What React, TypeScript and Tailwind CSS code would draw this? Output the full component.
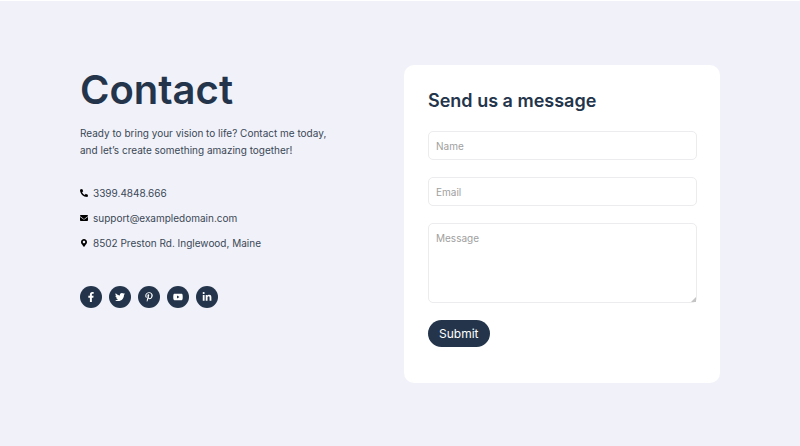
import React from "react";
import {
  FaEnvelope,
  FaFacebookF,
  FaLinkedinIn,
  FaMapMarkerAlt,
  FaPhoneAlt,
  FaPinterestP,
  FaTwitter,
  FaYoutube,
} from "react-icons/fa";

const details = [
  { icon: FaPhoneAlt, text: "3399.4848.666" },
  { icon: FaEnvelope, text: "support@exampledomain.com" },
  { icon: FaMapMarkerAlt, text: "8502 Preston Rd. Inglewood, Maine" },
];

const socials = [
  { icon: FaFacebookF, label: "Facebook" },
  { icon: FaTwitter, label: "Twitter" },
  { icon: FaPinterestP, label: "Pinterest" },
  { icon: FaYoutube, label: "YouTube" },
  { icon: FaLinkedinIn, label: "LinkedIn" },
];

const field =
  "block w-full rounded-[5px] border border-[#ececee] bg-white px-[7px] text-[10px] leading-4 text-[#3a4856] placeholder:text-[#a0a0a0] focus:outline-none focus:border-[#24354b]";

export default function App() {
  return (
    <main className="min-h-screen border-t border-white bg-[#f1f1f9] px-20 py-16 font-['Inter',sans-serif] text-[10px] leading-4 text-[#3a4856]">
      <div className="grid grid-cols-2 gap-2">
        <section>
          <h1 className="text-[40px] font-semibold leading-[50px] text-[#24354b]">Contact</h1>
          <p className="mt-[10px] leading-[17px]">
            Ready to bring your vision to life? Contact me today,
            <br />
            and let’s create something amazing together!
          </p>
          <ul className="mt-[26px] flex flex-col gap-[9px]">
            {details.map(({ icon: Icon, text }) => (
              <li key={text} className="flex items-center gap-[5px]">
                <Icon className="size-2 text-black" aria-hidden="true" />
                {text}
              </li>
            ))}
          </ul>
          <div className="mt-[35px] flex gap-[7px]">
            {socials.map(({ icon: Icon, label }) => (
              <a
                key={label}
                href="#"
                aria-label={label}
                className="flex size-[22px] items-center justify-center rounded-full bg-[#24354b] text-white"
              >
                <Icon className="size-[10px]" aria-hidden="true" />
              </a>
            ))}
          </div>
        </section>

        <section className="rounded-[10px] bg-white pt-6 pr-[23px] pb-9 pl-6">
          <h2 className="text-[18px] font-semibold leading-6 text-[#24354b]">Send us a message</h2>
          <form className="mt-[18px] flex flex-col items-start gap-[17px]" onSubmit={(e) => e.preventDefault()}>
            <input className={`${field} h-[29px]`} type="text" placeholder="Name" aria-label="Name" />
            <input className={`${field} h-[29px]`} type="email" placeholder="Email" aria-label="Email" />
            <div className="relative w-full">
              <textarea className={`${field} h-20 resize-none py-[6px]`} placeholder="Message" aria-label="Message" />
              <svg className="absolute right-px bottom-px size-[5px] text-[#c4c4c4]" viewBox="0 0 5 5" aria-hidden="true">
                <path d="M5 0v5H0z" fill="currentColor" />
              </svg>
            </div>
            <button type="submit" className="h-[27px] rounded-full bg-[#24354b] px-[11px] text-xs text-white">
              Submit
            </button>
          </form>
        </section>
      </div>
    </main>
  );
}
